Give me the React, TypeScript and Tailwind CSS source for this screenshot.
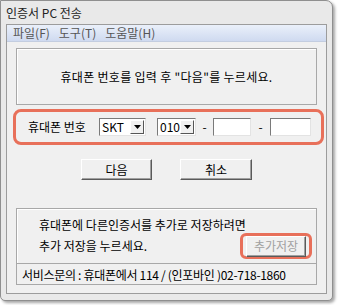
import React from "react";

const font = { fontFamily: '"Noto Sans CJK KR", "Noto Sans", sans-serif' };

function Combo({ value, width }: { value: string; width: string }) {
  return (
    <div
      className={`${width} h-[18px] flex items-stretch bg-white border border-t-[#7a7a7a] border-l-[#7a7a7a] border-r-[#e3e3e3] border-b-[#e3e3e3]`}
    >
      <div className="flex-1 pl-[2px] text-[12px] leading-[16px] text-black">
        {value}
      </div>
      <div className="w-[14px] my-[1px] mr-[1px] bg-[#f0f0f0] border border-t-white border-l-white border-r-[#555] border-b-[#555] flex items-center justify-center">
        <svg width="7" height="4" viewBox="0 0 7 4">
          <path d="M0 0 H7 L3.5 4 Z" fill="#000" />
        </svg>
      </div>
    </div>
  );
}

function Field({ width }: { width: string }) {
  return (
    <div
      className={`${width} h-[18px] bg-white border border-t-[#7a7a7a] border-l-[#7a7a7a] border-r-[#e3e3e3] border-b-[#e3e3e3]`}
    />
  );
}

function Btn({
  label,
  width,
  disabled,
}: {
  label: string;
  width: string;
  disabled?: boolean;
}) {
  return (
    <div
      className={`${width} h-[21px] bg-[#f0f0f0] border border-t-white border-l-white border-r-[#5a5a5a] border-b-[#5a5a5a] shadow-[inset_-1px_-1px_0_#a0a0a0] flex items-center justify-center text-[12px] ${
        disabled ? "text-[#a0a0a0]" : "text-black"
      }`}
    >
      {label}
    </div>
  );
}

export default function App() {
  return (
    <div className="w-[338px] h-[305px] bg-white" style={font}>
      <div className="w-[333px] h-[301px] rounded-tr-[7px] rounded-br-[5px] rounded-bl-[5px] border border-[#8f8f8f] bg-[#e9e9e9] shadow-[2px_2px_3px_rgba(0,0,0,0.35)] flex flex-col">
        {/* title */}
        <div className="h-[23px] pl-[5px] pt-[1px] flex items-center text-[12px] text-[#222]">
          인증서 PC 전송
        </div>

        {/* client */}
        <div className="mx-[5px] h-[270px] border border-[#9c9c9c] bg-[#f0f0f0] flex flex-col">
          {/* menu */}
          <div className="h-[17px] bg-gradient-to-b from-[#eaf0fa] to-[#cfdaf0] border-b border-[#c3cde0] flex items-center text-[12px] text-[#555]">
            <span className="ml-[6px]">파일(F)</span>
            <span className="ml-[9px]">도구(T)</span>
            <span className="ml-[9px]">도움말(H)</span>
          </div>

          {/* instruction */}
          <div className="ml-[9px] mt-[6px] w-[301px] h-[57px] border border-[#a8a8a8] shadow-[inset_1px_1px_0_#fff] flex items-center justify-center text-[12px] text-black tracking-[0.3px]">
            휴대폰 번호를 입력 후 "다음"를 누르세요.
          </div>

          {/* phone row */}
          <div className="ml-[6px] mt-[4px] w-[311px] h-[36px] rounded-[8px] border-[3px] border-[#e8705a] flex items-center text-[12px] text-black">
            <span className="ml-[12px] w-[71px]">휴대폰 번호</span>
            <Combo value="SKT" width="w-[47px]" />
            <div className="w-[11px]" />
            <Combo value="010" width="w-[39px]" />
            <span className="w-[17px] text-center">-</span>
            <Field width="w-[38px]" />
            <span className="w-[19px] text-center">-</span>
            <Field width="w-[41px]" />
          </div>

          {/* buttons */}
          <div className="mt-[14px] flex justify-center gap-[28px]">
            <Btn label="다음" width="w-[71px]" />
            <Btn label="취소" width="w-[72px]" />
          </div>

          {/* bottom box */}
          <div className="ml-[9px] mt-[28px] w-[301px] h-[56px] border border-[#a8a8a8] shadow-[inset_1px_1px_0_#fff] pl-[22px] pr-[4px] pt-[8px] text-[12px] text-black">
            <div className="leading-[16px]">
              휴대폰에 다른인증서를 추가로 저장하려면
            </div>
            <div className="flex items-center justify-between">
              <span>추가 저장을 누르세요.</span>
              <div className="w-[72px] h-[26px] rounded-[6px] border-[3px] border-[#e8705a] flex items-center justify-center">
                <Btn label="추가저장" width="w-[60px]" disabled />
              </div>
            </div>
          </div>
          <div className="ml-[9px] w-[301px] h-[21px] border border-t-0 border-[#a8a8a8] pl-[5px] pt-[2px] flex items-center text-[12px] text-black tracking-[-0.3px]">
            서비스문의 : 휴대폰에서 114 / (인포바인 )02-718-1860
          </div>
        </div>
      </div>
    </div>
  );
}
